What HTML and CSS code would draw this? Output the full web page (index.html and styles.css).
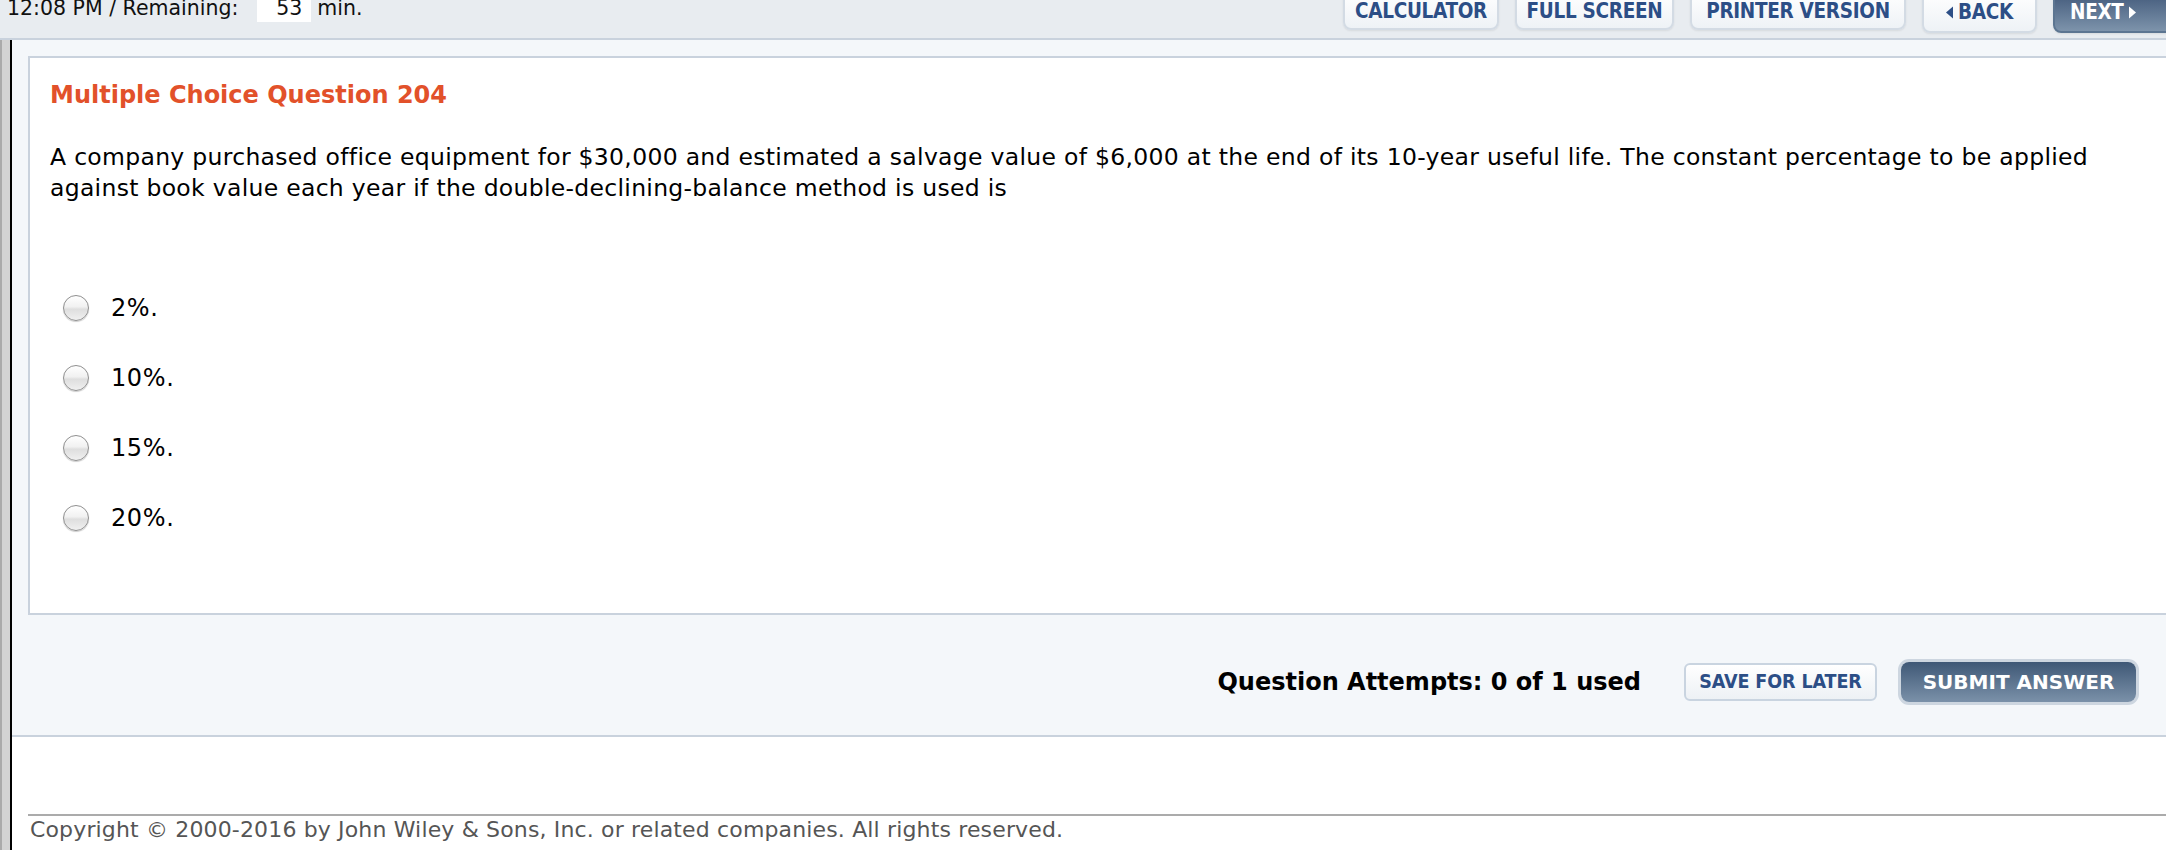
FILE: index.html
```html
<!DOCTYPE html>
<html lang="en">
<head>
<meta charset="utf-8">
<title>Multiple Choice Question 204</title>
<link rel="stylesheet" href="styles.css">
</head>
<body>
<header class="topbar">
  <div class="clock">
    <span class="clock-label">12:08 PM / Remaining:</span>
    <span class="clock-value">53</span>
    <span class="clock-unit">min.</span>
  </div>
  <nav class="nav">
    <a class="btn btn-calc">CALCULATOR</a>
    <a class="btn btn-full">FULL SCREEN</a>
    <a class="btn btn-print">PRINTER VERSION</a>
    <a class="btn btn-back"><svg class="tri" viewBox="0 0 7 12" width="7" height="13"><polygon points="7,0 0,6 7,12" fill="currentColor"/></svg>BACK</a>
    <a class="btn btn-next">NEXT<svg class="tri" viewBox="0 0 7 12" width="7" height="13"><polygon points="0,0 7,6 0,12" fill="currentColor"/></svg></a>
  </nav>
</header>
<div class="frame">
  <div class="rail"></div>
  <div class="content">
    <section class="panel">
      <div class="qbox">
        <h1 class="qtitle">Multiple Choice Question 204</h1>
        <p class="qtext">A company purchased office equipment for $30,000 and estimated a salvage value of $6,000 at the end of its 10-year useful life. The constant percentage to be applied against book value each year if the double-declining-balance method is used is</p>
        <ul class="options">
          <li class="option"><span class="radio"></span><span class="opt-label">2%.</span></li>
          <li class="option"><span class="radio"></span><span class="opt-label">10%.</span></li>
          <li class="option"><span class="radio"></span><span class="opt-label">15%.</span></li>
          <li class="option"><span class="radio"></span><span class="opt-label">20%.</span></li>
        </ul>
      </div>
      <div class="actions">
        <span class="attempts">Question Attempts: 0 of 1 used</span>
        <a class="btn-save">SAVE FOR LATER</a>
        <a class="btn-submit">SUBMIT ANSWER</a>
      </div>
    </section>
    <footer class="footer">
      <div class="copyright">Copyright © 2000-2016 by John Wiley &amp; Sons, Inc. or related companies. All rights reserved.</div>
    </footer>
  </div>
</div>
</body>
</html>
```
FILE: styles.css
```css
html, body {
  margin: 0;
  padding: 0;
  background: #ffffff;
  overflow: hidden;
}
body {
  font-family: "DejaVu Sans", Verdana, sans-serif;
  color: #000;
  width: 2166px;
  height: 850px;
}

/* top bar */
.topbar {
  height: 38px;
  background: #e8ecf0;
  border-bottom: 2px solid #c9d2dd;
  display: flex;
  justify-content: space-between;
  align-items: flex-start;
}
.clock {
  display: flex;
  align-items: flex-start;
  margin-top: -5px;
  padding-left: 7px;
  font-size: 20.5px;
  line-height: 27px;
  color: #111;
}
.clock-value {
  background: #ffffff;
  width: 54px;
  text-align: right;
  padding-right: 9px;
  box-sizing: border-box;
  margin-left: 19px;
  margin-right: 6px;
}
.nav {
  display: flex;
  gap: 16px;
  margin-right: -17px;
  align-items: flex-start;
}
.btn {
  display: flex;
  align-items: center;
  justify-content: center;
  gap: 5px;
  box-sizing: border-box;
  height: 40px;
  margin-top: -10px;
  padding-top: 1px;
  border: 2px solid #d3dbe4;
  border-radius: 8px;
  background: linear-gradient(#ffffff, #eef2f6);
  box-shadow: 0 1px 2px rgba(0, 0, 0, 0.08);
  color: #2c4e86;
  font-family: "DejaVu Sans Condensed", "DejaVu Sans", sans-serif;
  font-weight: bold;
  font-size: 20.5px;
  letter-spacing: -0.3px;
}
.btn-calc { width: 156px; }
.btn-full { width: 159px; }
.btn-print { width: 216px; }
.btn-back { width: 115px; height: 43px; }
.btn-next {
  width: 130px;
  height: 43px;
  justify-content: flex-start;
  padding-left: 15px;
  color: #ffffff;
  border-color: #5c7591;
  background: linear-gradient(#41597a, #7d93ab);
}
.tri { display: block; }

/* frame */
.frame {
  display: flex;
  height: 810px;
}
.rail {
  width: 8px;
  flex: none;
  background: #d3d3d3;
  border-left: 2px solid #aaaaaa;
  border-right: 2px solid #000000;
}
.content {
  flex: 1;
  min-width: 0;
}
.panel {
  background: #f4f7fa;
  padding: 16px 0 0 16px;
  border-bottom: 2px solid #c9d2dd;
}
.qbox {
  background: #ffffff;
  border: 2px solid #c9d2dd;
  margin-right: -40px;
  padding: 22px 0 60px 20px;
}
.qtitle {
  margin: 0;
  font-size: 24px;
  line-height: 30px;
  font-weight: bold;
  color: #e2512a;
}
.qtext {
  margin: 32px 0 0 0;
  width: 2075px;
  font-size: 23.5px;
  letter-spacing: 0.3px;
  line-height: 31px;
}
.options {
  list-style: none;
  margin: 69px 0 0 0;
  padding: 0 0 0 13px;
}
.option {
  height: 70px;
  display: flex;
  align-items: center;
  gap: 22px;
  font-size: 24px;
  letter-spacing: 0.6px;
}
.radio {
  width: 26px;
  height: 26px;
  box-sizing: border-box;
  border-radius: 50%;
  border: 1px solid #8f8f8f;
  background: linear-gradient(#ffffff 0%, #f1f1f1 45%, #dedede 55%, #f0f0f0 100%);
  box-shadow: 0 1px 1px rgba(0, 0, 0, 0.2);
}

/* actions */
.actions {
  height: 107px;
  padding: 13px 30px 0 0;
  display: flex;
  justify-content: flex-end;
  align-items: center;
}
.attempts {
  font-size: 24px;
  font-weight: bold;
  margin-right: 43px;
}
.btn-save {
  width: 193px;
  height: 38px;
  box-sizing: border-box;
  display: flex;
  align-items: center;
  justify-content: center;
  border: 2px solid #c9d4e0;
  border-radius: 6px;
  background: linear-gradient(#ffffff, #edf1f5);
  color: #2c4e86;
  font-family: "DejaVu Sans Condensed", "DejaVu Sans", sans-serif;
  font-weight: bold;
  font-size: 19.5px;
  letter-spacing: -0.1px;
  margin-right: 24px;
}
.btn-submit {
  width: 235px;
  height: 40px;
  box-sizing: border-box;
  display: flex;
  align-items: center;
  justify-content: center;
  border-radius: 8px;
  background: linear-gradient(#3f5876, #7b91a9);
  box-shadow: 0 0 0 3px #cdd6e0;
  color: #ffffff;
  font-weight: bold;
  font-size: 20px;
}

/* footer */
.footer {
  padding: 77px 0 0 16px;
}
.copyright {
  border-top: 2px solid #ababab;
  padding-left: 2px;
  font-size: 22px;
  letter-spacing: 0.15px;
  line-height: 28px;
  color: #555555;
}
```
